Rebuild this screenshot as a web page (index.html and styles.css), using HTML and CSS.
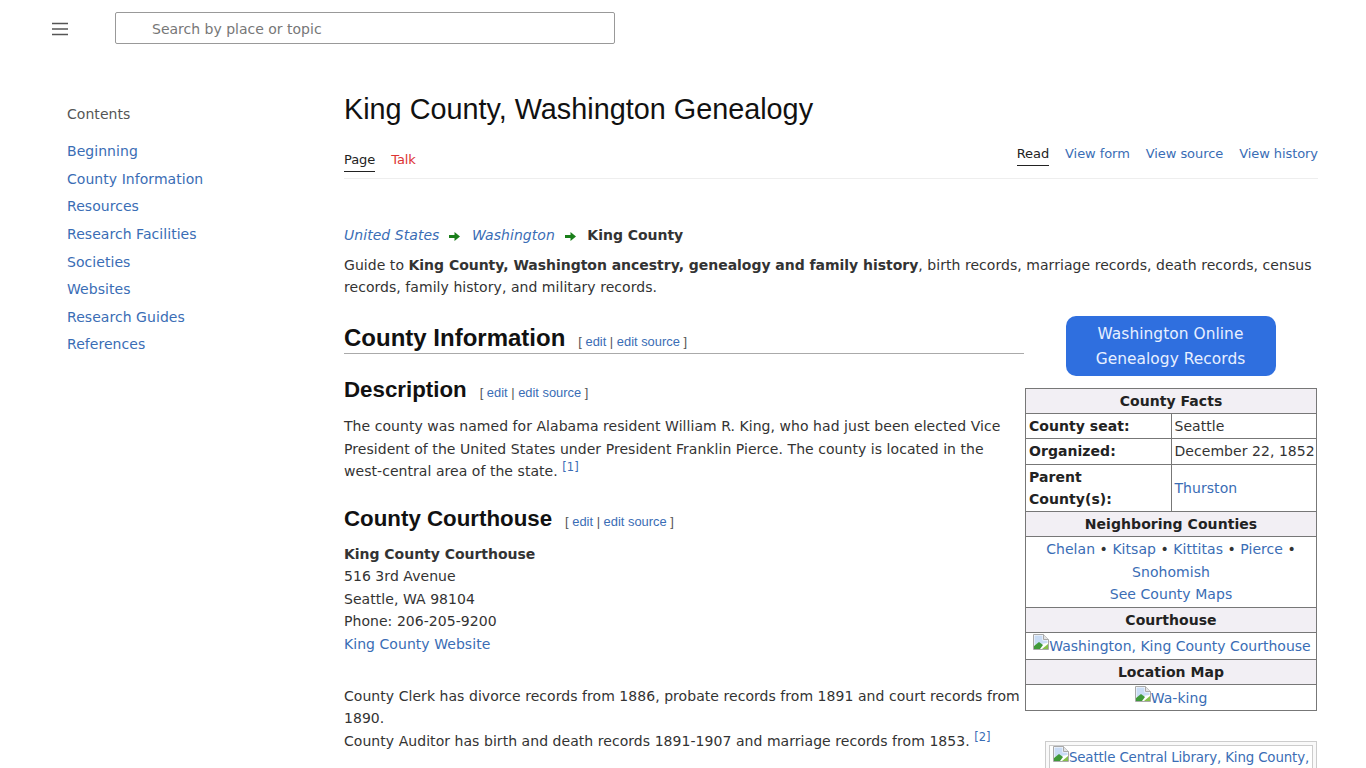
FILE: index.html
```html
<!DOCTYPE html>
<html lang="en">
<head>
<meta charset="utf-8">
<title>King County, Washington Genealogy</title>
<link rel="stylesheet" href="styles.css">
</head>
<body>
<svg class="defs" width="0" height="0" aria-hidden="true">
  <symbol id="broken" viewBox="0 0 16 16">
    <path d="M.5.5H10.5L15.5 5.5V15.5H.5Z" fill="#fff" stroke="#a9a9a9"/>
    <path d="M10.5 .5V5.5H15.5" fill="#e4e4e4" stroke="#a9a9a9"/>
    <path d="M1.5 1.5H9.5V6.5H14.5V9L1.5 11Z" fill="#c9dcf5"/>
    <path d="M1 15V12L6 8 10 11 7 15Z" fill="#3f9a3a"/>
    <path d="M9 15 15 10V15Z" fill="#86c04a"/>
  </symbol>
  <symbol id="arrow" viewBox="0 0 11 9">
    <path d="M0 3H5.5V0L11 4.500 5.500 9V6H0Z" fill="#1a7f1a"/>
  </symbol>
</svg>
<header class="topbar">
  <button class="menu" aria-label="Menu">
    <svg width="16" height="14" viewBox="0 0 16 14"><path d="M0 1.500H16M0 7H16M0 12.500H16" stroke="#555" stroke-width="1.6"/></svg>
  </button>
  <input class="search" type="text" placeholder="Search by place or topic">
</header>
<div class="layout">
  <nav class="toc">
    <div class="toc-title">Contents</div>
    <ul class="toc-list">
      <li><a href="#">Beginning</a></li>
      <li><a href="#">County Information</a></li>
      <li><a href="#">Resources</a></li>
      <li><a href="#">Research Facilities</a></li>
      <li><a href="#">Societies</a></li>
      <li><a href="#">Websites</a></li>
      <li><a href="#">Research Guides</a></li>
      <li><a href="#">References</a></li>
    </ul>
  </nav>
  <main class="main">
    <h1 class="title">King County, Washington Genealogy</h1>
    <div class="tabs">
      <div class="tabgroup tabs-left">
        <a class="tab active" href="#">Page</a>
        <a class="tab red" href="#">Talk</a>
      </div>
      <div class="tabgroup tabs-right">
        <a class="tab active" href="#">Read</a>
        <a class="tab" href="#">View form</a>
        <a class="tab" href="#">View source</a>
        <a class="tab" href="#">View history</a>
      </div>
    </div>
    <article class="content">
      <p class="crumbs"><a href="#"><i>United States</i></a><svg class="arrow"><use href="#arrow"/></svg><a href="#"><i>Washington</i></a><svg class="arrow"><use href="#arrow"/></svg><b>King County</b></p>
      <p class="intro">Guide to <b>King County, Washington ancestry, genealogy and family history</b>, birth records, marriage records, death records, census records, family history, and military records.</p>
      <aside class="side">
        <a class="cta" href="#">Washington Online<br>Genealogy Records</a>
        <table class="facts">
          <tr><th colspan="2">County Facts</th></tr>
          <tr><td class="k">County seat:</td><td class="v">Seattle</td></tr>
          <tr><td class="k">Organized:</td><td class="v">December 22, 1852</td></tr>
          <tr><td class="k">Parent County(s):</td><td class="v"><a href="#">Thurston</a></td></tr>
          <tr><th colspan="2">Neighboring Counties</th></tr>
          <tr><td colspan="2" class="c"><a href="#">Chelan</a> &bull; <a href="#">Kitsap</a> &bull; <a href="#">Kittitas</a> &bull; <a href="#">Pierce</a> &bull; <a href="#">Snohomish</a><br><a href="#">See County Maps</a></td></tr>
          <tr><th colspan="2">Courthouse</th></tr>
          <tr><td colspan="2" class="c nowrap imgrow"><a href="#"><svg class="bi"><use href="#broken"/></svg>Washington, King County Courthouse</a></td></tr>
          <tr><th colspan="2">Location Map</th></tr>
          <tr><td colspan="2" class="c imgrow"><a href="#"><svg class="bi"><use href="#broken"/></svg>Wa-king</a></td></tr>
        </table>
        <div class="thumb"><div class="thumb-in"><a href="#"><svg class="bi"><use href="#broken"/></svg>Seattle Central Library, King County, Washington</a></div></div>
      </aside>
      <h2 class="h2">County Information<span class="edit">[ <a href="#">edit</a> | <a href="#">edit source</a> ]</span></h2>
      <h3 class="h3">Description<span class="edit">[ <a href="#">edit</a> | <a href="#">edit source</a> ]</span></h3>
      <p class="para">The county was named for Alabama resident William R. King, who had just been elected Vice President of the United States under President Franklin Pierce. The county is located in the west-central area of the state. <sup><a href="#">[1]</a></sup></p>
      <h3 class="h3 h3b">County Courthouse<span class="edit">[ <a href="#">edit</a> | <a href="#">edit source</a> ]</span></h3>
      <p class="para para-addr"><b>King County Courthouse</b><br>516 3rd Avenue<br>Seattle, WA 98104<br>Phone: 206-205-9200<br><a href="#">King County Website</a></p>
      <p class="para para-gap">County Clerk has divorce records from 1886, probate records from 1891 and court records from 1890.<br>County Auditor has birth and death records 1891-1907 and marriage records from 1853. <sup><a href="#">[2]</a></sup></p>
    </article>
  </main>
</div>
</body>
</html>
```
FILE: styles.css
```css
html, body { margin: 0; padding: 0; height: 768px; overflow: hidden; background: #fff; }
body { font-family: "DejaVu Sans", Verdana, sans-serif; font-size: 14px; line-height: 22.5px; color: #333; letter-spacing: 0.05px; }
a { color: #3a6db5; text-decoration: none; }
b { letter-spacing: -0.03px; }
.defs { position: absolute; }
.topbar { display: flex; align-items: center; height: 32px; padding: 12px 0 0 52px; }
.menu { width: 16px; height: 14px; padding: 0; border: 0; background: none; margin: 2px 47px 0 0; display: flex; }
.search { width: 500px; height: 32px; box-sizing: border-box; border: 1px solid #999; border-radius: 2px; padding: 2px 0 0 36px; font: 14px "DejaVu Sans", sans-serif; color: #333; background: #fff; }
.search::placeholder { color: #777; opacity: 1; }
.layout { display: flex; padding: 0 48px 0 67px; }
.toc { width: 277px; flex: none; padding-top: 59px; }
.toc-title { color: #555; line-height: 22px; margin-bottom: 15px; }
.toc-list { list-style: none; margin: 0; padding: 0; display: flex; flex-direction: column; gap: 5px; }
.toc-list li { line-height: 22.63px; }
.main { flex: 1; min-width: 0; }
.title { font: 400 28.8px/34px "Liberation Sans", Arial, sans-serif; letter-spacing: 0; color: #111; margin: 48px 0 0; }
.tabs { display: flex; justify-content: space-between; align-items: flex-start; height: 44px; margin-top: 8px; border-bottom: 1px solid #eee; font-size: 13px; letter-spacing: -0.07px; }
.tabgroup { display: flex; gap: 16px; }
.tabs-left { padding-top: 15px; }
.tabs-right { padding-top: 9px; }
.tab { line-height: 22px; height: 22px; display: block; }
.tab.active { color: #222; border-bottom: 1px solid #222; }
.tab.red { color: #d33; }
.content { display: block; padding-top: 45px; }
.content p { margin: 0; }
.crumbs { line-height: 22px; }
.crumbs b { color: #333; }
.arrow { width: 11px; height: 9px; margin: 0 11.500px 0 10px; vertical-align: -0.5px; }
.intro { margin-top: 8px !important; line-height: 22px; }
.side { float: right; width: 293px; margin: 18px 0 0 0; display: flex; flex-direction: column; align-items: center; }
.cta { display: block; width: 210px; height: 60px; box-sizing: border-box; background: #2f6fdf; color: #e8f0ff; border-radius: 10px; text-align: center; font-size: 15.4px; line-height: 25px; padding-top: 6px; margin: 0 2px 12px 0; }
.facts { width: 292px; border-collapse: collapse; align-self: flex-start; table-layout: fixed; }
.facts th, .facts td { border: 1px solid #777; padding: 1px 3px; font-size: 14px; line-height: 22.2px; }
.facts th { background: #f2eff4; color: #222; }
.facts .k { font-weight: 700; color: #222; width: 139px; }
.facts .v { white-space: nowrap; padding-right: 1px; }
.facts .c { text-align: center; padding-left: 6px; padding-right: 6px; line-height: 22.6px; }
.facts .nowrap { white-space: nowrap; padding-left: 2px; padding-right: 0; letter-spacing: 0; }
.facts .imgrow { padding-bottom: 1px; line-height: 22.3px; }
.bi { width: 16px; height: 16px; vertical-align: 1px; }
.thumb { align-self: flex-end; width: 272px; margin: 30px 1px 0 0; border: 1px solid #ccc; padding: 3px; box-sizing: border-box; background: #f9f9f9; }
.thumb-in { border: 1px solid #ccc; background: #fff; padding: 0; text-align: center; white-space: normal; letter-spacing: -0.15px; font-size: 13.4px; }
.thumb .bi { vertical-align: 0; }
.h2 { font: 700 24px/30px "Liberation Sans", Arial, sans-serif; letter-spacing: 0; color: #111; margin: 25px 294px 0 0; padding-bottom: 0; border-bottom: 1px solid #aaa; }
.h3 { font: 700 22.3px/28px "Liberation Sans", Arial, sans-serif; letter-spacing: 0; color: #111; margin: 22px 0 0; }
.h3b { margin-top: 22px; }
.edit { font: 400 12.9px "Liberation Sans", Arial, sans-serif; color: #555; margin-left: 13px; }
.para { margin-top: 11px !important; padding-right: 294px; }
.para-addr { margin-top: 10.45px !important; }
.para-gap { margin-top: 29.3px !important; }
sup { font-size: 11.5px; line-height: 0; vertical-align: 5px; }
```
